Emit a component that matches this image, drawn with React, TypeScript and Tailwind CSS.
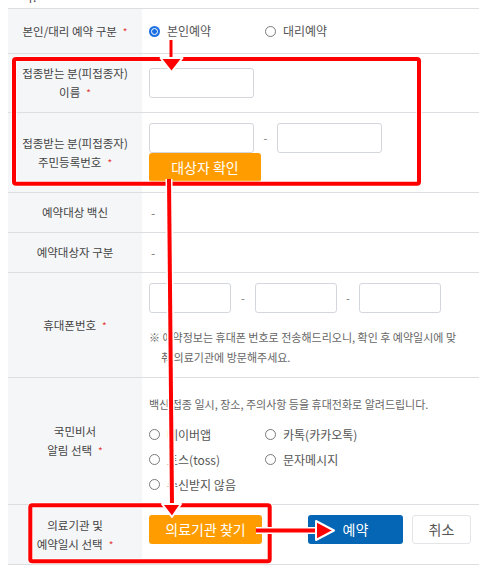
import React from "react";

function Req() {
    return <span className="ml-[6px] text-[10px] text-[#e53935] align-top">*</span>;
}

function Radio({ checked = false, label }: { checked?: boolean; label: string }) {
    return (
        <div className="flex items-center">
            {checked ? (
                <span className="w-[11px] h-[11px] rounded-full bg-[#1b6fe3] flex items-center justify-center">
                    <span className="w-[7px] h-[7px] rounded-full border-[1.5px] border-white bg-[#1b6fe3]" />
                </span>
            ) : (
                <span className="w-[11px] h-[11px] rounded-full border border-[#7a7a7a] bg-white" />
            )}
            <span className="ml-[7px] text-[12px] text-[#555]">{label}</span>
        </div>
    );
}

function Field({ w }: { w: string }) {
    return <input className={`${w} h-[30px] border border-[#d3d6db] rounded-[3px] bg-white outline-none`} />;
}

function Row({ label, h, children, top = false }: { label: React.ReactNode; h: string; children: React.ReactNode; top?: boolean }) {
    return (
        <div className={`grid grid-cols-[134px_1fr] border-b border-[#dcdee2] ${h}`}>
            <div className="bg-[#f5f6f8] flex items-center justify-center text-center text-[11.5px] leading-[19px] text-[#444]">
                <div>{label}</div>
            </div>
            <div className={`pl-[7px] flex ${top ? "flex-col" : "items-center"}`}>{children}</div>
        </div>
    );
}

export default function App() {
    return (
        <div className="relative w-[493px] h-[568px] bg-white overflow-hidden font-['Noto_Sans_CJK_KR','Noto_Sans',sans-serif]">
            <div className="h-[8px] overflow-hidden pl-[22px]">
                <div className="mt-[-12px] text-[12px] leading-[18px] text-[#444]">다.</div>
            </div>

            <div className="ml-2 w-[471px] border-t border-[#dcdee2]">
                <Row h="h-[45px]" label={<>본인/대리 예약 구분<Req /></>}>
                    <div className="grid grid-cols-[116px_1fr] w-full">
                        <Radio checked label="본인예약" />
                        <Radio label="대리예약" />
                    </div>
                </Row>

                <Row h="h-[59px]" label={<>접종받는 분(피접종자)<br />이름<Req /></>}>
                    <Field w="w-[105px]" />
                </Row>

                <Row h="h-[80px]" top label={<>접종받는 분(피접종자)<br />주민등록번호<Req /></>}>
                    <div className="flex flex-col justify-center h-full">
                        <div className="flex items-center">
                            <Field w="w-[105px]" />
                            <span className="w-[23px] text-center text-[11px] text-[#777]">-</span>
                            <Field w="w-[105px]" />
                        </div>
                        <button className="w-[112px] h-[29px] rounded-[3px] bg-[#ff9d00] text-white text-[14px]">대상자 확인</button>
                    </div>
                </Row>

                <Row h="h-[40px]" label="예약대상 백신">
                    <span className="pl-[2px] text-[12px] text-[#777]">-</span>
                </Row>

                <Row h="h-[40px]" label="예약대상자 구분">
                    <span className="pl-[2px] text-[12px] text-[#777]">-</span>
                </Row>

                <Row h="h-[105px]" top label={<>휴대폰번호<Req /></>}>
                    <div className="flex items-center pt-[10px]">
                        <Field w="w-[82px]" />
                        <span className="w-[24px] text-center text-[11px] text-[#777]">-</span>
                        <Field w="w-[82px]" />
                        <span className="w-[22px] text-center text-[11px] text-[#777]">-</span>
                        <Field w="w-[82px]" />
                    </div>
                    <div className="mt-[14px] text-[11px] leading-[20px] text-[#666] whitespace-nowrap">
                        <div>※ 예약정보는 휴대폰 번호로 전송해드리오니, 확인 후 예약일시에 맞</div>
                        <div className="pl-[12px]">춰 의료기관에 방문해주세요.</div>
                    </div>
                </Row>

                <Row h="h-[127px]" top label={<>국민비서<br />알림 선택<Req /></>}>
                    <div className="pt-[16px] text-[11px] leading-[20px] text-[#666] whitespace-nowrap">
                        백신 접종 일시, 장소, 주의사항 등을 휴대전화로 알려드립니다.
                    </div>
                    <div className="mt-[8px] grid grid-cols-[116px_1fr] auto-rows-[25px] items-center">
                        <Radio label="네이버앱" />
                        <Radio label="카톡(카카오톡)" />
                        <Radio label="토스(toss)" />
                        <Radio label="문자메시지" />
                        <Radio label="수신받지 않음" />
                    </div>
                </Row>

                <Row h="h-[60px]" top label={<>의료기관 및<br />예약일시 선택<Req /></>}>
                    <div className="flex pt-[10px]">
                        <button className="w-[113px] h-[29px] rounded-[3px] bg-[#ff9d00] text-white text-[14px]">의료기관 찾기</button>
                        <button className="ml-[46px] w-[95px] h-[29px] rounded-[3px] bg-[#0566b5] text-white text-[14px]">예약</button>
                        <button className="ml-[9px] w-[59px] h-[29px] rounded-[3px] bg-white border border-[#e3e5e8] text-[#555] text-[14px]">취소</button>
                    </div>
                </Row>
            </div>

            {/* annotation overlay */}
            <svg className="absolute left-0 top-0 pointer-events-none" width="493" height="568" viewBox="0 0 493 568">
                <rect x="14" y="59" width="405" height="124.7" rx="2" fill="none" stroke="#fff" strokeWidth="6" opacity="0.7" />
                <rect x="14" y="59" width="405" height="124.7" rx="2" fill="none" stroke="#f00" strokeWidth="4" />
                <rect x="30.3" y="505.3" width="239.4" height="56" rx="2" fill="none" stroke="#fff" strokeWidth="6" opacity="0.7" />
                <rect x="30.3" y="505.3" width="239.4" height="56" rx="2" fill="none" stroke="#f00" strokeWidth="4" />

                <line x1="171" y1="40" x2="171" y2="60" stroke="#f00" strokeWidth="3" />
                <polygon points="160.5,58 182.5,58 171.5,72" fill="#f00" stroke="#fff" strokeWidth="2" strokeLinejoin="round" />

                <line x1="169" y1="179" x2="172" y2="506" stroke="#fff" strokeWidth="7" />
                <line x1="169" y1="179" x2="172" y2="506" stroke="#f00" strokeWidth="4" />
                <polygon points="162,504 181,504 172,517" fill="#f00" stroke="#fff" strokeWidth="2" strokeLinejoin="round" />

                <line x1="256" y1="530.5" x2="318" y2="530.5" stroke="#fff" strokeWidth="7" />
                <line x1="256" y1="530.5" x2="318" y2="530.5" stroke="#f00" strokeWidth="4" />
                <polygon points="316,521 316,540 334,530.5" fill="#f00" stroke="#fff" strokeWidth="2" strokeLinejoin="round" />
            </svg>
        </div>
    );
}
